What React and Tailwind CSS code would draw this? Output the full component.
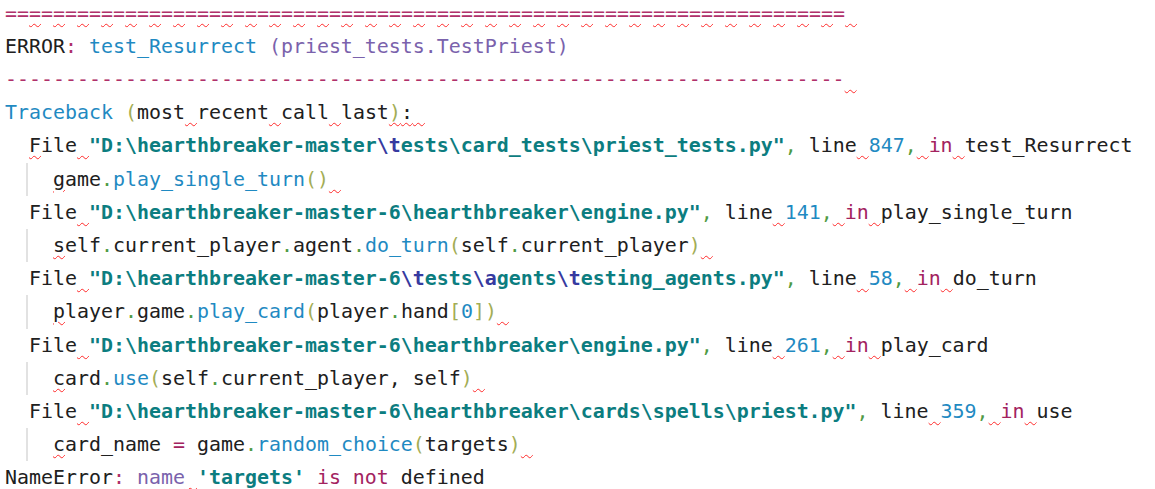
import React from "react";

const colors = {
    d: "text-[#202020]",
    p: "text-[#b0306a]",
    b: "text-[#1f8ac2]",
    u: "text-[#7a62ac]",
    s: "text-[#0c7d80] font-bold",
    e: "text-[#363aa0] font-bold",
    g: "text-[#4f9a45]",
    o: "text-[#a3ad55]",
    k: "text-[#a3235f]",
};

const squiggle = "underline decoration-wavy decoration-[#ff2a2a] decoration-1 underline-offset-[3px]";

// row of "=" with a squiggle under every second char
const eqRow = () => {
    const out = [];
    for (let i = 0; i < 70; i++) {
        out.push(["=", i >= 2 && i % 2 === 0 ? "p~" : "p"]);
    }
    out.push([" ", "p~"]);
    return out;
};

const fileLine = (path, line, fn, squigF) => [
    ["  ", "d"],
    ["F", squigF ? "d~" : "d"],
    ["ile", "d"],
    [" ", "d~"],
    ...path,
    [",", "g"],
    [" line", "d"],
    [" ", "d~"],
    [line, "b"],
    [",", "g"],
    [" ", "d~"],
    ["in", "k"],
    [" ", "d~"],
    [fn, "d"],
];

const lines = [
    { tokens: eqRow() },
    {
        tokens: [
            ["ERROR", "d"], [":", "p"], [" ", "d"], ["test_Resurrect", "b"], [" ", "d"],
            ["(priest_tests.TestPriest)", "u"],
        ],
    },
    { tokens: [["-".repeat(70), "p"], [" ", "p~"]] },
    {
        tokens: [
            ["Traceback", "b"], [" ", "d"], ["(", "o"], ["most", "d"], [" ", "d~"], ["recent", "d"],
            [" ", "d~"], ["call", "d"], [" ", "d~"], ["last", "d"], [")", "o~"], [":", "d~"], [" ", "d~"],
        ],
    },
    {
        tokens: fileLine(
            [['"D:\\hearthbreaker-master', "s"], ["\\t", "e"], ['ests\\card_tests\\priest_tests.py"', "s"]],
            "847", "test_Resurrect", true
        ),
    },
    {
        code: true,
        tokens: [["g", "d~"], ["ame", "d"], [".", "g"], ["play_single_turn", "b"], ["()", "o"], [" ", "d~"]],
    },
    {
        tokens: fileLine([['"D:\\hearthbreaker-master-6\\hearthbreaker\\engine.py"', "s"]], "141", "play_single_turn"),
    },
    {
        code: true,
        tokens: [
            ["s", "d~"], ["elf", "d"], [".", "g"], ["current_player", "d"], [".", "g"], ["agent", "d"], [".", "g"],
            ["do_turn", "b"], ["(", "o"], ["self", "d"], [".", "g"], ["current_player", "d"], [")", "o"], [" ", "d~"],
        ],
    },
    {
        tokens: fileLine(
            [
                ['"D:\\hearthbreaker-master-6', "s"], ["\\t", "e"], ["ests", "s"], ["\\a", "e"], ["gents", "s"],
                ["\\t", "e"], ['esting_agents.py"', "s"],
            ],
            "58", "do_turn"
        ),
    },
    {
        code: true,
        tokens: [
            ["p", "d~"], ["layer", "d"], [".", "g"], ["game", "d"], [".", "g"], ["play_card", "b"], ["(", "o"],
            ["player", "d"], [".", "g"], ["hand", "d"], ["[", "o"], ["0", "b"], ["]", "o"], [")", "o"], [" ", "d~"],
        ],
    },
    {
        tokens: fileLine([['"D:\\hearthbreaker-master-6\\hearthbreaker\\engine.py"', "s"]], "261", "play_card"),
    },
    {
        code: true,
        tokens: [
            ["c", "d~"], ["ard", "d"], [".", "g"], ["use", "b"], ["(", "o"], ["self", "d"], [".", "g"],
            ["current_player, self", "d"], [")", "o"], [" ", "d~"],
        ],
    },
    {
        tokens: fileLine(
            [['"D:\\hearthbreaker-master-6\\hearthbreaker\\cards\\spells\\priest.py"', "s"]],
            "359", "use"
        ),
    },
    {
        code: true,
        tokens: [
            ["c", "d~"], ["ard_name ", "d"], ["=", "k"], [" game", "d"], [".", "g"], ["random_choice", "b"],
            ["(", "o"], ["targets", "d"], [")", "o"], [" ", "d~"],
        ],
    },
    {
        tokens: [
            ["NameError", "d"], [":", "p"], [" ", "d"], ["name", "u"], [" ", "d~"], ["'targets'", "s"],
            [" ", "d"], ["is not", "k"], [" defined", "d"],
        ],
    },
];

function Tokens({ tokens }) {
    return tokens.map(([text, kind], i) => {
        const sq = kind.endsWith("~");
        const c = colors[kind.replace("~", "")];
        return (
            <span key={i} className={sq ? `${c} ${squiggle}` : c}>
                {text}
            </span>
        );
    });
}

export default function App() {
    return (
        <div className="h-[489px] w-full overflow-hidden bg-white">
            <div className="-mt-[3.5px] pl-[5px] font-['DejaVu_Sans_Mono','Liberation_Mono',monospace] text-[19.93px] leading-[33.2px]">
                {lines.map((line, i) =>
                    line.code ? (
                        <div key={i} className="flex">
                            <span className="w-[21px] shrink-0" />
                            <div className="border-l-2 border-[#e2e2e2] pl-[25px] whitespace-pre">
                                <Tokens tokens={line.tokens} />
                            </div>
                        </div>
                    ) : (
                        <div key={i} className="whitespace-pre">
                            <Tokens tokens={line.tokens} />
                        </div>
                    )
                )}
            </div>
        </div>
    );
}
